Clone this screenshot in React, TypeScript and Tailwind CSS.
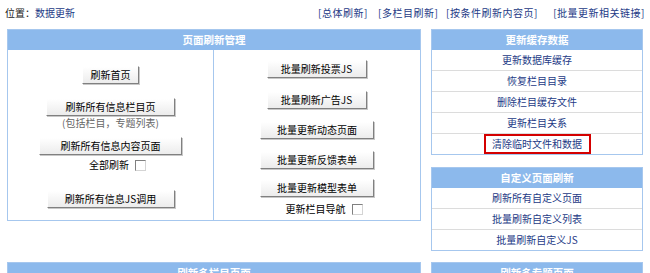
// 数据更新 page: refresh management panels

const FONT = { fontFamily: '"Noto Sans CJK SC", "Noto Sans", sans-serif' }

function Btn({ w, label, className = "" }: { w: string; label: string; className?: string }) {
  return (
    <div
      className={`${w} h-[18px] flex items-center justify-center text-[10px] leading-none text-black bg-gradient-to-b from-white to-[#ececec] border border-t-white border-l-white border-r-[#808080] border-b-[#808080] shadow-[1px_1px_0_#c8c8c8] ${className}`}
    >
      {label}
    </div>
  )
}

function Check({ label, className = "" }: { label: string; className?: string }) {
  return (
    <div className={`flex items-center gap-[6px] text-[10px] leading-none text-black ${className}`}>
      <span>{label}</span>
      <span className="w-[11px] h-[11px] border border-t-[#808080] border-l-[#808080] border-r-[#d4d4d4] border-b-[#d4d4d4] bg-white" />
    </div>
  )
}

function Header({ title }: { title: string }) {
  return (
    <div className="h-[20px] bg-[#8cb9ec] flex items-center justify-center text-white font-bold text-[10.5px] leading-none">
      {title}
    </div>
  )
}

function LinkPanel({ title, items, boxed }: { title: string; items: string[]; boxed?: number }) {
  return (
    <div className="border border-[#a6c7ee] bg-white">
      <Header title={title} />
      {items.map((it, i) => (
        <div
          key={it}
          className={`flex items-center justify-center text-[10px] leading-none text-[#1d3a86] ${i < items.length - 1 ? "h-[21px] border-b border-[#dcdcdc]" : "h-[20px]"}`}
        >
          {boxed === i ? (
            <span className="h-[20px] w-[107px] flex items-center justify-center border-2 border-[#d40000]">{it}</span>
          ) : (
            it
          )}
        </div>
      ))}
    </div>
  )
}

export default function App() {
  return (
    <div className="w-[650px] h-[273px] overflow-hidden bg-white" style={FONT}>
      {/* location bar */}
      <div className="h-[25px] flex items-center text-[10px] leading-none pl-[5px] pr-[5px]">
        <span className="text-[#222]">位置：</span>
        <span className="text-[#1d3a86]">数据更新</span>
        <div className="ml-auto flex text-[#1d3a86] tracking-[0.5px]">
          <span className="w-[60px]">[总体刷新]</span>
          <span className="w-[68px]">[多栏目刷新]</span>
          <span className="w-[107px]">[按条件刷新内容页]</span>
          <span className="w-[92px] text-right">[批量更新相关链接]</span>
        </div>
      </div>

      <div className="flex items-start pl-[7px] pt-[4px] gap-[10px]">
        {/* left column */}
        <div className="w-[414px] flex flex-col">
          <div className="border border-[#a6c7ee] bg-white">
            <Header title="页面刷新管理" />
            <div className="flex h-[170px]">
              <div className="w-[206px] border-r border-[#a6c7ee] flex flex-col items-center pt-[16px]">
                <Btn w="w-[57px]" label="刷新首页" />
                <Btn w="w-[129px]" label="刷新所有信息栏目页" className="mt-[14px]" />
                <div className="text-[10px] leading-none text-[#666] h-[13px] flex items-center">(包括栏目，专题列表)</div>
                <Btn w="w-[143px]" label="刷新所有信息内容页面" className="mt-[8px]" />
                <Check label="全部刷新" className="mt-[2px] h-[16px] ml-[14px]" />
                <Btn w="w-[128px]" label="刷新所有信息JS调用" className="mt-[17px]" />
              </div>
              <div className="flex-1 flex flex-col items-center pt-[10px]">
                <Btn w="w-[100px]" label="批量刷新投票JS" className="-ml-[1px]" />
                <Btn w="w-[100px]" label="批量刷新广告JS" className="mt-[13px] -ml-[1px]" />
                <Btn w="w-[114px]" label="批量更新动态页面" className="mt-[12px]" />
                <Btn w="w-[114px]" label="批量更新反馈表单" className="mt-[12px]" />
                <Btn w="w-[114px]" label="批量更新模型表单" className="mt-[10px]" />
                <Check label="更新栏目导航" className="mt-[4px] h-[16px] ml-[14px]" />
              </div>
            </div>
          </div>
          <div className="mt-[41px] border border-[#a6c7ee]">
            <Header title="刷新多栏目页面" />
          </div>
        </div>

        {/* right column */}
        <div className="w-[212px] flex flex-col">
          <LinkPanel
            title="更新缓存数据"
            items={["更新数据库缓存", "恢复栏目目录", "删除栏目缓存文件", "更新栏目关系", "清除临时文件和数据"]}
            boxed={4}
          />
          <div className="mt-[12px]">
            <LinkPanel title="自定义页面刷新" items={["刷新所有自定义页面", "批量刷新自定义列表", "批量刷新自定义JS"]} />
          </div>
          <div className="mt-[11px] border border-[#a6c7ee]">
            <Header title="刷新多专题页面" />
          </div>
        </div>
      </div>
    </div>
  )
}
